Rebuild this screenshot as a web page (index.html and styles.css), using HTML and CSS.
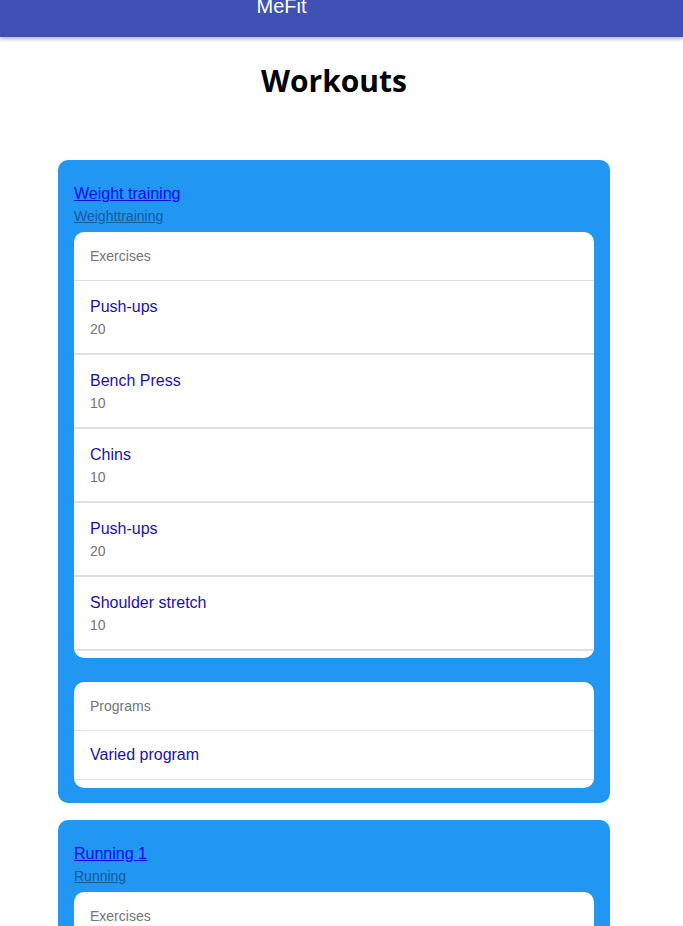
FILE: index.html
```html
<html>
	<head>
		<title>MeFit - Workouts</title>
		<link rel="stylesheet" href="styles.css">
	</head>
	<body>
		<div class="topbar">
			<span class="brand">MeFit</span>
		</div>
		<h1 class="page-title">Workouts</h1>
		<div class="workouts">
			<div class="workout">
				<a class="workout-name" href="#">Weight training</a>
				<a class="workout-type" href="#">Weighttraining</a>
				<div class="list">
					<div class="list-head">Exercises</div>
					<div class="list-item">
						<span class="item-name">Push-ups</span>
						<span class="item-count">20</span>
					</div>
					<div class="list-item">
						<span class="item-name">Bench Press</span>
						<span class="item-count">10</span>
					</div>
					<div class="list-item">
						<span class="item-name">Chins</span>
						<span class="item-count">10</span>
					</div>
					<div class="list-item">
						<span class="item-name">Push-ups</span>
						<span class="item-count">20</span>
					</div>
					<div class="list-item">
						<span class="item-name">Shoulder stretch</span>
						<span class="item-count">10</span>
					</div>
				</div>
				<div class="list">
					<div class="list-head">Programs</div>
					<div class="list-item single">
						<span class="item-name">Varied program</span>
					</div>
				</div>
			</div>
			<div class="workout">
				<a class="workout-name" href="#">Running 1</a>
				<a class="workout-type" href="#">Running</a>
				<div class="list">
					<div class="list-head">Exercises</div>
					<div class="list-item">
						<span class="item-name">Running</span>
						<span class="item-count">1</span>
					</div>
				</div>
			</div>
		</div>
	</body>
</html>
```

FILE: styles.css
```css
body,html{
	margin:0;
	font-family:"Liberation Sans", Arial, sans-serif;
	background:#fff;
	overflow:hidden;
}
.topbar{
	height:37px;
	background-color:#3f51b5;
	box-shadow:0 2px 4px rgba(0,0,0,0.3);
	color:#fff;
	display:flex;
	justify-content:center;
	align-items:flex-end;
	padding-right:120px;
	box-sizing:border-box;
}
.brand{
	font-size:20px;
	line-height:20px;
	margin-bottom:21px;
}
.page-title{
	margin:25px 0 0;
	text-align:center;
	font-family:"Open Sans", sans-serif;
	font-weight:700;
	font-size:30px;
	line-height:38px;
	padding-right:15px;
	color:#000;
}
.workouts{
	width:552px;
	margin:60px 0 0 58px;
	display:flex;
	flex-direction:column;
	gap:17px;
}
.workout{
	background-color:#2196f3;
	border-radius:10px;
	padding:24px 16px 15px;
	display:flex;
	flex-direction:column;
}
.workout-name{
	color:#0a0aee;
	font-size:16px;
	line-height:20px;
	align-self:flex-start;
}
.workout-type{
	color:#145d97;
	font-size:14px;
	line-height:18px;
	margin-top:3px;
	align-self:flex-start;
}
.list{
	background:#fff;
	border-radius:10px;
	padding-bottom:7px;
	margin-top:7px;
	overflow:hidden;
}
.list + .list{
	margin-top:24px;
	padding-bottom:8px;
}
.list-head{
	height:48px;
	line-height:48px;
	padding:0 16px;
	font-size:14px;
	color:#757575;
	border-bottom:1px solid #e0e0e0;
}
.list-item{
	height:74px;
	padding:0 16px;
	box-sizing:border-box;
	border-bottom:2px solid #e0e0e0;
	display:flex;
	flex-direction:column;
	justify-content:center;
}
.list-item.single{
	height:49px;
	border-bottom-width:1px;
}
.item-name{
	color:#1a12a8;
	font-size:16px;
	line-height:24px;
}
.item-count{
	color:#757575;
	font-size:14px;
	line-height:20px;
}
```
